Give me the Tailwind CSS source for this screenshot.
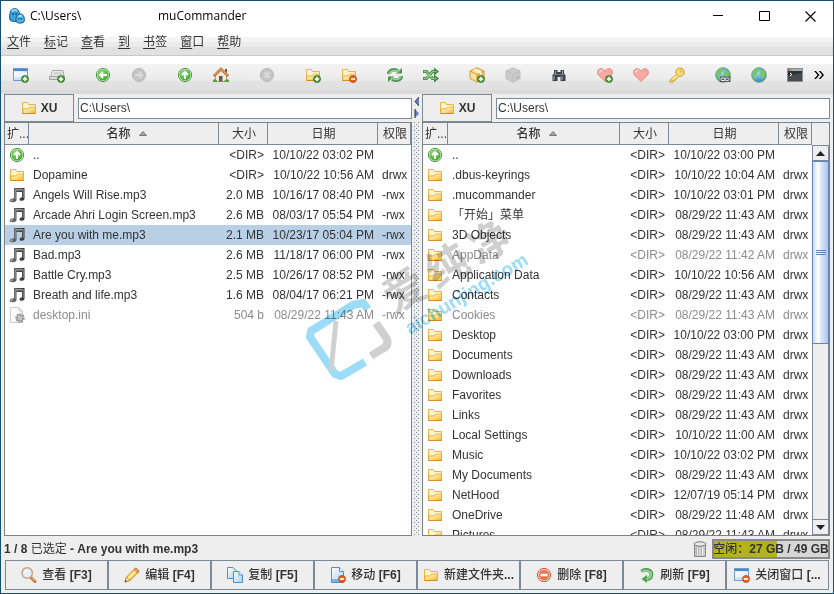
<!DOCTYPE html>
<html lang="zh-CN">
<head>
    <meta charset="UTF-8">
    <meta name="viewport" content="width=device-width, initial-scale=1.0">
    <title>muCommander</title>

    <script src="https://cdn.jsdelivr.net/npm/@tailwindcss/browser@4"></script>
</head>
<body class="h-screen overflow-hidden bg-[#eeeeee] font-['Liberation_Sans','Noto_Sans_CJK_SC',sans-serif] text-xs text-[#333333]">

    <!-- icon sprite, kept rendered so the gradients resolve -->
    <svg class="absolute size-0" aria-hidden="true">
        <defs>
            <linearGradient id="g-folder" x1="0" y1="0" x2="1" y2="1"><stop offset="0" stop-color="#fffbe6"/><stop offset=".5" stop-color="#fbe08a"/><stop offset="1" stop-color="#f0b429"/></linearGradient>
            <linearGradient id="g-page" x1="0" y1="0" x2="1" y2="1"><stop offset="0" stop-color="#ffffff"/><stop offset="1" stop-color="#a9cdf2"/></linearGradient>
            <linearGradient id="g-note" x1="0" y1="0" x2="1" y2="0"><stop offset="0" stop-color="#777777"/><stop offset="1" stop-color="#333333"/></linearGradient>
            <radialGradient id="g-green" cx=".4" cy=".35" r=".7"><stop offset="0" stop-color="#8fe36a"/><stop offset="1" stop-color="#3aa52a"/></radialGradient>
            <radialGradient id="g-globe" cx=".4" cy=".35" r=".7"><stop offset="0" stop-color="#a8dcff"/><stop offset="1" stop-color="#2c7fc4"/></radialGradient>

            <symbol id="plus" viewBox="0 0 16 16"><circle cx="12" cy="12" r="3.5" fill="#4f9a35" stroke="#2f7420" stroke-width=".8"/><path d="M12 9.8v4.4M9.8 12h4.4" stroke="#fff" stroke-width="1.5"/></symbol>
            <symbol id="minus" viewBox="0 0 16 16"><circle cx="12" cy="12" r="3.5" fill="#e8641c" stroke="#b8430c" stroke-width=".8"/><path d="M9.8 12h4.4" stroke="#fff" stroke-width="1.6"/></symbol>
            <symbol id="folder" viewBox="0 0 16 16"><path d="M1.5 13.5V2.5h5l1 2h7v9z" fill="#fdf0b8" stroke="#e6b452"/><path d="M3 4h3M3 6.500h10" stroke="#fff" stroke-width="1"/><path d="M2 13.500V9h5l1.500-2h6v6.500z" fill="url(#g-folder)" stroke="#e3a440" stroke-width=".8"/><path d="M1.500 13.500h13" stroke="#d48a28"/></symbol>
            <symbol id="window" viewBox="0 0 16 16"><rect x=".5" y="1.500" width="14" height="12" fill="url(#g-page)" stroke="#6f9bd1"/><path d="M1 2h13v2H1z" fill="#4a86d4"/><path d="M1 5h13v5H1z" fill="#fff" fill-opacity=".6"/></symbol>
            <symbol id="drive" viewBox="0 0 16 16"><path d="M3.500 3.500h10.500l1 6H1.500z" fill="#ececec" stroke="#a6a6a6"/><path d="M5 5h8l.5 3H4z" fill="#d4d4d4"/><path d="M.5 9.500h15v3H.5z" fill="#dcdcdc" stroke="#a0a0a0"/></symbol>
            <symbol id="disc" viewBox="0 0 16 16"><circle cx="8" cy="8" r="6.600" fill="#e2f3da" stroke="#3d8a32" stroke-width=".9"/><circle cx="8" cy="8" r="5.500" fill="url(#g-green)"/></symbol>
            <symbol id="up" viewBox="0 0 16 16"><use href="#disc"/><path d="M8 12V5.500M5 8l3-3 3 3" fill="none" stroke="#fff" stroke-width="2"/></symbol>
            <symbol id="back" viewBox="0 0 16 16"><use href="#disc"/><path d="M12 8H5.500M8 5L5 8l3 3" fill="none" stroke="#fff" stroke-width="2"/></symbol>
            <symbol id="forward" viewBox="0 0 16 16"><circle cx="8" cy="8" r="6.500" fill="#c6c6c6" stroke="#b4b4b4"/><path d="M4 8h6.500M8 5l3 3-3 3" fill="none" stroke="#dadada" stroke-width="1.800"/></symbol>
            <symbol id="stop" viewBox="0 0 16 16"><circle cx="8" cy="8" r="6.500" fill="#c6c6c6" stroke="#b4b4b4"/><path d="M5.500 5.500l5 5M10.500 5.500l-5 5" stroke="#dadada" stroke-width="2"/></symbol>
            <symbol id="home" viewBox="0 0 16 16"><path d="M2.500 8L8 3l5.500 5v6.500h-11z" fill="#f5ead8" stroke="#a88a68" stroke-width=".8"/><path d="M12 2h2v4l-2-2z" fill="#8c4a2a"/><path d="M.8 9L8 2l7.200 7" fill="none" stroke="#a86530" stroke-width="2.600"/><path d="M1.200 8.500L8 2l6.800 6.500" fill="none" stroke="#e8a35c" stroke-width="1.200"/><path d="M6 14.500V9h3.500v5.500z" fill="#5c5a62"/><path d="M0 15v-2l2-1 2 1.500V15zM16 15v-2l-2-1-2.500 1.500V15z" fill="#4ea53a"/></symbol>
            <symbol id="sync" viewBox="0 0 16 16"><path d="M1.500 7C2 3 7 1.500 11 4" fill="none" stroke="#4c9450" stroke-width="3.400"/><path d="M9 6.500h6V1z" fill="#4c9450"/><path d="M2 6.500C3 4 7 2.500 12 5" fill="none" stroke="#96d094" stroke-width="1.800"/><path d="M14.500 9C14 13 9 14.500 5 12" fill="none" stroke="#4c9450" stroke-width="3.400"/><path d="M7 9.500H1V15z" fill="#4c9450"/><path d="M14 9.500C13 12 9 13.500 4 11" fill="none" stroke="#96d094" stroke-width="1.800"/></symbol>
            <symbol id="swap" viewBox="0 0 16 16"><path d="M0 4.500h3.500l6 7H12M0 11.500h3.500l6-7H12" fill="none" stroke="#3c7f40" stroke-width="3"/><path d="M11 .5l5 4-5 4zM11 7.500l5 4-5 4z" fill="#3c7f40"/><path d="M.5 4.500h3l6 7h4M.5 11.500h3l6-7h4" fill="none" stroke="#8ccb88" stroke-width="1.500"/></symbol>
            <symbol id="box" viewBox="0 0 16 16"><path d="M8 .8l7 3.200v7.500L8 15.200 1 11.500V4z" fill="#fae0a0" stroke="#d39a34"/><path d="M8 7.500v7.500l7-3.500V4z" fill="#efb852"/><path d="M1 4l7 3.500L15 4M8 7.500V15" fill="none" stroke="#c98a2a" stroke-width=".8"/><path d="M5 2.200l6.500 3.300v2.500" fill="none" stroke="#fff6d8" stroke-width="1.800"/></symbol>
            <symbol id="unbox" viewBox="0 0 16 16"><path d="M8 .8l7 3.200v7.500L8 15.200 1 11.500V4z" fill="#cbcbcb" stroke="#bebebe"/><path d="M1 4l7 3.500L15 4M8 7.500V15" fill="none" stroke="#bebebe"/><path d="M9.500 12l3-4 3 4z" fill="#b9b9b9"/></symbol>
            <symbol id="find" viewBox="0 0 16 16"><path d="M3 3h3.500v2h3V3H13v3l1.500 2v6H9.500v-4h-3v4h-5V8L3 6z" fill="#3e434a"/><path d="M3 9v4M11 9v4M4.500 4v3M11.500 4v3" stroke="#9aa2ac" stroke-width="1.200"/><path d="M2 7.500h12" stroke="#848c96" stroke-width=".8"/></symbol>
            <symbol id="heart" viewBox="0 0 16 16"><path d="M8 14.500L1.500 8C-.5 5 1 1.800 4 1.800c2 0 3.300 1 4 2.500.7-1.500 2-2.500 4-2.500 3 0 4.500 3.200 2.500 6.200z" fill="#f9a8a2" stroke="#e28b7c"/><path d="M2.500 5.500C2.700 4 4 3 5.500 3.500" fill="none" stroke="#fde0dc" stroke-width="1.400"/></symbol>
            <symbol id="key" viewBox="0 0 16 16"><path d="M7 8L1 13v2h3v-1.500h2V12h1.500l1.700-2" fill="#f8d768" stroke="#d09a2c"/><circle cx="11" cy="5.200" r="4.200" fill="#fbdc70" stroke="#d09a2c"/><path d="M8.500 8.500L3 13" stroke="#fbe48c" stroke-width="2"/><circle cx="12.300" cy="3.800" r="1.200" fill="#fff" stroke="#c98d1c" stroke-width=".7"/></symbol>
            <symbol id="globe" viewBox="0 0 16 16"><circle cx="8" cy="8" r="7.300" fill="url(#g-globe)" stroke="#68ad68"/><path d="M1.500 6C2.500 3 5 1.500 8 1.500l1 2-2.500 1.800L6 8 3.500 8.500 5 11l-.5 2C2.500 11.500 1 9 1.500 6zM10 3l3.500 1 1 4-2 4-2 .5-.5-3L8.500 7z" fill="#79c56c"/></symbol>
            <symbol id="server" viewBox="0 0 16 16"><use href="#globe"/><path d="M5 9.500h10.500V15H5z" fill="#555b60"/><rect x="6" y="11" width="4" height="2.500" rx="1" fill="none" stroke="#fff"/><rect x="10" y="11" width="4" height="2.500" rx="1" fill="none" stroke="#ddd"/></symbol>
            <symbol id="terminal" viewBox="0 0 16 16"><rect x=".5" y="1.500" width="15" height="13" fill="#2e3436" stroke="#8a8f91"/><path d="M1 2h14v2H1z" fill="#a9adad"/><path d="M1 3h2" stroke="#d65340" stroke-width="1.500"/><path d="M3 3h2" stroke="#75b84a" stroke-width="1.500"/><path d="M1 14V9l14-3v8z" fill="#454c4f"/><path d="M3 6l2 1.500L3 9" fill="none" stroke="#fff"/></symbol>
            <symbol id="music" viewBox="0 0 16 16"><path d="M5 1h10.500v10.500c0 1.200-1 2-2.300 2.300-1.500.3-2.700-.4-2.700-1.500s1.200-2 2.500-2V5H7.500v7.800c0 1.200-1.500 2.400-3.500 2.400-2.200.2-3.500-.6-3.500-1.700S2.500 11.500 5 11z" fill="url(#g-note)"/><path d="M6.300 2.800h8" stroke="#bdbdbd"/><path d="M6.300 3v9M14.300 3v8" stroke="#999" stroke-width=".8"/><path d="M2 13.500l2-.7" stroke="#bbb"/></symbol>
            <symbol id="config" viewBox="0 0 16 16"><path d="M1.500.5h8.500l3.500 3.500v11.500h-12z" fill="#fafafa" stroke="#cccccc"/><path d="M10 .5V4h3.500" fill="#e8e8e8" stroke="#cccccc"/><circle cx="11" cy="11" r="3.700" fill="#d5d5d5" stroke="#8a8a8a" stroke-width="2" stroke-dasharray="1.600 1.200"/><circle cx="11" cy="11" r="3" fill="#d6d6d6" stroke="#999"/><circle cx="11" cy="11" r="1.200" fill="#fff" stroke="#888" stroke-width=".7"/></symbol>
            <symbol id="view" viewBox="0 0 16 16"><path d="M10 10.500l4 4" stroke="#b47636" stroke-width="3" stroke-linecap="round"/><path d="M10.500 10.500l3.500 3.500" stroke="#e3b36c" stroke-width="1.200"/><circle cx="6.200" cy="6" r="5.200" fill="#e3f1fc" stroke="#cba27c" stroke-width="1.500"/><path d="M3.300 5.500c.3-1.500 1.500-2.300 3-2.300" fill="none" stroke="#fff" stroke-width="1.500"/></symbol>
            <symbol id="edit" viewBox="0 0 16 16"><path d="M1 15l1.500-5L11 1.500c1-1 4.500 2 3.500 3.500L6 13.500z" fill="#fcd25a" stroke="#c78a1c"/><path d="M4 11.500L12 3.500" stroke="#fff2b8" stroke-width="1.500"/><path d="M1 15l1.500-5 3.500 3.500z" fill="#f5dfc0" stroke="#b98238" stroke-width=".7"/><path d="M1 15l.7-2 1.300 1.300z" fill="#333"/><path d="M11 1.500c1-1 4.500 2 3.500 3.500l-1 1-3.500-3.500z" fill="#ec9a76" stroke="#bd6a3c" stroke-width=".7"/></symbol>
            <symbol id="copy" viewBox="0 0 16 16"><path d="M.5.5H6L9.500 4v7.500h-9z" fill="url(#g-page)" stroke="#4d8fd0"/><path d="M6.500 4.500H12L15.500 8v7.500h-9z" fill="url(#g-page)" stroke="#4d8fd0"/><path d="M12 4.500V8h3.500" fill="#fff" stroke="#4d8fd0"/></symbol>
            <symbol id="move" viewBox="0 0 16 16"><path d="M1.500.5h8l4 4v11h-12z" fill="url(#g-page)" stroke="#4d8fd0"/><path d="M9.500.5v4h4" fill="#fff" stroke="#4d8fd0"/><path d="M2 12h11v3H2z" fill="#79b3ea"/></symbol>
            <symbol id="delete" viewBox="0 0 16 16"><circle cx="8" cy="8" r="6.600" fill="#f9dccf" stroke="#cc5138"/><circle cx="8" cy="8" r="5.200" fill="#e8734f"/><path d="M4.500 8h7" stroke="#fff" stroke-width="2.500"/></symbol>
            <symbol id="refresh" viewBox="0 0 16 16"><path d="M2.500 4.500C6 1.500 12.500 2.500 12.500 7.500c0 3-2 4.500-5 4.700" fill="none" stroke="#4c9450" stroke-width="3.600"/><path d="M8 8v8L2.500 12z" fill="#4da04e"/><path d="M3 4.500C6 2.500 12.300 3 12.300 7.500c0 2.500-1.500 4-5 4.500" fill="none" stroke="#92d38e" stroke-width="1.900"/></symbol>
            <symbol id="trash" viewBox="0 0 16 16"><path d="M2.500 4h11v11.500h-11z" fill="#c9c9c9" stroke="#8a8a8a"/><path d="M5.500 6v8M8 6v8M10.500 6v8" stroke="#f4f4f4" stroke-width="1.200"/><path d="M4.300 6v8M6.800 6v8M9.300 6v8" stroke="#909090" stroke-width=".6"/><ellipse cx="8" cy="3" rx="6" ry="2.200" fill="#e8e8e8" stroke="#777"/></symbol>
            <symbol id="logo" viewBox="0 0 16 16"><path d="M1 12C0 8 1 4 2 2.500 3.500 0 8 0 9.500 2.500c1.200 2 1.500 6 1 9.500-2 2-7.500 2-9.500 0z" fill="#3aa5da" stroke="#1c5b8c"/><path d="M3 3.500C4 1.800 7 1.500 8 3" fill="none" stroke="#a6e0fa" stroke-width="1.500"/><path d="M7.500 14c-1-2.500-.5-5 .5-6.500 1.500-2 5-2 6.300 0 1 1.500 1.400 4.500.7 6.500-2 1.500-6 1.500-7.500 0z" fill="#4db4e6" stroke="#1c5b8c"/><path d="M9.500 8.500c1-1 2.500-1 3.300 0" fill="none" stroke="#b4e8ff" stroke-width="1.300"/><path d="M4 5v2M7 5v2M10 10v1.500M12.500 10v1.500" stroke="#123a5e" stroke-width="1.200"/></symbol>
        </defs>
    </svg>

    <div class="relative flex h-full flex-col border border-[#16506e]">

        <header class="flex h-[30px] shrink-0 items-center bg-white pl-2 text-black">
            <svg class="mr-[5px] size-4"><use href="#logo"/></svg>
            <h1 class="flex flex-1 font-['Open_Sans','Noto_Sans_CJK_SC',sans-serif] text-xs"><span class="w-32">C:\Users\</span><span>muCommander</span></h1>
            <button aria-label="最小化" class="flex h-full w-[46px] items-center justify-center"><svg class="size-[11px]" viewBox="0 0 11 11"><path d="M0 4.500h10" stroke="#000"/></svg></button>
            <button aria-label="最大化" class="flex h-full w-[46px] items-center justify-center"><svg class="size-[11px]" viewBox="0 0 11 11"><path d="M.5.5h10v9h-10z" fill="none" stroke="#000"/></svg></button>
            <button aria-label="关闭" class="flex h-full w-[46px] items-center justify-center"><svg class="size-[11px]" viewBox="0 0 11 11"><path d="M.5.5l10 10M10.500.5l-10 10" stroke="#000" stroke-width="1.100"/></svg></button>
        </header>

        <nav class="flex h-[25px] shrink-0 items-center gap-[13px] border-b border-[#c8c8c8] bg-[linear-gradient(#fff_6px,#f4f4f4_6px,#f4f4f4_11px,#ebebeb_11px,#ebebeb_16px,#e1e1e1_16px)] pb-[3px] pl-1.5">
            <button><u class="underline-offset-2">文</u>件</button>
            <button><u class="underline-offset-2">标</u>记</button>
            <button><u class="underline-offset-2">查</u>看</button>
            <button><u class="underline-offset-2">到</u></button>
            <button><u class="underline-offset-2">书</u>签</button>
            <button><u class="underline-offset-2">窗</u>口</button>
            <button><u class="underline-offset-2">帮</u>助</button>
        </nav>

        <div id="toolbar" class="flex h-[38px] shrink-0 gap-2.5 bg-[linear-gradient(#fff_8px,#f3f3f3_8px,#efefef_17px,#e9e9e9_25px,#e2e2e2_25px,#e0e0e0_34px,#dadada_34px)] pl-0.5"></div>

        <main class="grid min-h-0 flex-1 grid-cols-[minmax(0,1fr)_10px_minmax(0,1fr)] px-[3px]">
            <section class="flex min-h-0 flex-col">
                <div class="flex h-7 shrink-0 items-center gap-1">
                    <button class="flex h-7 w-[70px] items-center justify-center gap-1 border border-[#7a8a99] font-bold"><svg class="size-4"><use href="#folder"/></svg>XU</button>
                    <input aria-label="左侧路径" value="C:\Users\" class="h-[21px] min-w-0 flex-1 border border-[#7a8a99] bg-white px-px">
                </div>
                <div class="flex min-h-0 flex-1 overflow-hidden border border-[#7d8287] bg-white">
                    <table class="w-full table-fixed border-separate border-spacing-0 self-start">
                        <colgroup><col class="w-6"><col><col class="w-[49px]"><col class="w-[110px]"><col class="w-[33px]"></colgroup>
                        <thead></thead>
                        <tbody id="left-files"></tbody>
                    </table>
                </div>
            </section>

            <div class="flex min-h-0 flex-col items-center pt-0.5">
                <svg class="h-[26px] w-2 shrink-0" viewBox="0 0 8 26"><path d="M6 1v9L2 5.500z" fill="#6382bf"/><path d="M6 1L2 5.500 6 10" fill="none" stroke="#333"/><path d="M2 13v9l4-4.500z" fill="#6382bf"/><path d="M2 13v9" stroke="#333"/></svg>
                <svg class="min-h-0 w-1.5 flex-1">
                    <pattern id="grip" width="4" height="4" patternUnits="userSpaceOnUse"><path d="M0 0h1v1H0zM2 2h1v1H2z" fill="#7a8a99"/></pattern>
                    <rect width="100%" height="100%" fill="url(#grip)"/>
                </svg>
            </div>

            <section class="flex min-h-0 flex-col">
                <div class="flex h-7 shrink-0 items-center gap-1">
                    <button class="flex h-7 w-[70px] items-center justify-center gap-1 border border-[#7a8a99] font-bold"><svg class="size-4"><use href="#folder"/></svg>XU</button>
                    <input aria-label="右侧路径" value="C:\Users\" class="h-[21px] min-w-0 flex-1 border border-[#7a8a99] bg-white px-px">
                </div>
                <div class="flex min-h-0 flex-1 overflow-hidden border border-[#7d8287] bg-white">
                    <table class="min-w-0 flex-1 table-fixed border-separate border-spacing-0 self-start">
                        <colgroup><col class="w-6"><col><col class="w-[49px]"><col class="w-[110px]"><col class="w-[33px]"></colgroup>
                        <thead></thead>
                        <tbody id="right-files"></tbody>
                    </table>
                    <div class="flex w-[17px] shrink-0 flex-col bg-[#eeeeee] pt-[22px]">
                        <button aria-label="向上滚动" class="flex h-4 shrink-0 items-center justify-center border border-[#7a8a99]"><svg class="h-[5px] w-[9px]" viewBox="0 0 9 5"><path d="M0 5h9L4.500 0z" fill="#222"/></svg></button>
                        <div class="flex min-h-0 flex-1 flex-col border-x border-[#7a8a99]">
                            <div class="-mx-px flex h-[51%] flex-col items-center justify-center gap-px border border-[#6382bf] bg-[linear-gradient(90deg,#c8ddf2,#fff_35%,#dbe8f5_55%,#a9c7e8)]">
                                <span class="h-px w-2.5 bg-[#6382bf]"></span>
                                <span class="h-px w-2.5 bg-[#6382bf]"></span>
                                <span class="h-px w-2.5 bg-[#6382bf]"></span>
                            </div>
                        </div>
                        <button aria-label="向下滚动" class="flex h-4 shrink-0 items-center justify-center border border-[#7a8a99]"><svg class="h-[5px] w-[9px]" viewBox="0 0 9 5"><path d="M0 0h9L4.500 5z" fill="#222"/></svg></button>
                    </div>
                </div>
            </section>
        </main>

        <div class="flex h-6 shrink-0 items-center gap-1 px-[3px] pt-px font-bold">
            <span class="flex-1">1 / 8 <span class="font-normal">已选定</span> - Are you with me.mp3</span>
            <button aria-label="回收站"><svg class="size-4"><use href="#trash"/></svg></button>
            <div class="flex h-5 w-[118px] items-center justify-center whitespace-nowrap border-2 border-[#8a8a8a] bg-[linear-gradient(90deg,#b5b31a_55%,#d6d6d6_55%)]"><span class="font-medium">空闲：</span>27 GB / 49 GB</div>
        </div>

        <footer id="commands" class="flex shrink-0 px-1 pb-[3px]"></footer>

        <!-- site watermark -->
        <svg class="pointer-events-none absolute top-[199px] left-[289px] h-[190px] w-[270px] mix-blend-multiply" viewBox="0 0 270 190">
            <g fill="none" stroke-width="8" stroke-linejoin="round">
                <path d="M78 109L73 103 63 105 21 131 20 137 45 174 51 176 75 162" stroke="#9bdcf8"/>
                <path d="M46 121L41 171" stroke="#d0d0d0" stroke-width="5"/>
                <path d="M86 123L97 139Q99 146 92 149L81 156" stroke="#d0d0d0"/>
            </g>
            <text transform="translate(104 114) rotate(-30)" x="0 49 98" class="font-['Noto_Sans_CJK_SC',sans-serif] text-[42px] font-bold" fill="#cfcfcf">爱纯净</text>
            <text transform="translate(120 135) rotate(-31)" class="text-[19px] font-bold" fill="#9bdcf8">aichunjing.com</text>
        </svg>
    </div>

    <script>
        // [icon, badge, label]
        const toolGroups = [
            [['window', 'plus', '新建窗口'], ['drive', 'plus', '新建标签']],
            [['back', '', '后退'], ['forward', '', '前进']],
            [['up', '', '上级文件夹'], ['home', '', '主文件夹']],
            [['stop', '', '停止']],
            [['folder', 'plus', '标记组'], ['folder', 'minus', '取消标记组']],
            [['sync', '', '交换文件夹'], ['swap', '', '设置相同文件夹']],
            [['box', 'plus', '打包'], ['unbox', '', '解包']],
            [['find', '', '查找']],
            [['heart', 'plus', '添加书签'], ['heart', '', '编辑书签'], ['key', '', '编辑凭据']],
            [['server', '', '连接到服务器'], ['globe', '', '显示服务器连接'], ['terminal', '', '运行命令']]
        ];

        const commands = [
            ['view', '', '查看', '[F3]'],
            ['edit', '', '编辑', '[F4]'],
            ['copy', '', '复制', '[F5]'],
            ['move', 'minus', '移动', '[F6]'],
            ['folder', '', '新建文件夹', '...'],
            ['delete', '', '删除', '[F8]'],
            ['refresh', '', '刷新', '[F9]'],
            ['window', 'minus', '关闭窗口', '[...']
        ];

        // [icon, name, size, date, permissions, state]
        const leftFiles = [
            ['up', '..', '<DIR>', '10/10/22 03:02 PM', ''],
            ['folder', 'Dopamine', '<DIR>', '10/10/22 10:56 AM', 'drwx'],
            ['music', 'Angels Will Rise.mp3', '2.0 MB', '10/16/17 08:40 PM', '-rwx'],
            ['music', 'Arcade Ahri Login Screen.mp3', '2.6 MB', '08/03/17 05:54 PM', '-rwx'],
            ['music', 'Are you with me.mp3', '2.1 MB', '10/23/17 05:04 PM', '-rwx', 'selected'],
            ['music', 'Bad.mp3', '2.6 MB', '11/18/17 06:00 PM', '-rwx'],
            ['music', 'Battle Cry.mp3', '2.5 MB', '10/26/17 08:52 PM', '-rwx'],
            ['music', 'Breath and life.mp3', '1.6 MB', '08/04/17 06:21 PM', '-rwx'],
            ['config', 'desktop.ini', '504 b', '08/29/22 11:43 AM', '-rwx', 'hidden']
        ];

        const rightFiles = [
            ['up', '..', '<DIR>', '10/10/22 03:00 PM', ''],
            ['folder', '.dbus-keyrings', '<DIR>', '10/10/22 10:04 AM', 'drwx'],
            ['folder', '.mucommander', '<DIR>', '10/10/22 03:01 PM', 'drwx'],
            ['folder', '「开始」菜单', '<DIR>', '08/29/22 11:43 AM', 'drwx'],
            ['folder', '3D Objects', '<DIR>', '08/29/22 11:43 AM', 'drwx'],
            ['folder', 'AppData', '<DIR>', '08/29/22 11:42 AM', 'drwx', 'hidden'],
            ['folder', 'Application Data', '<DIR>', '10/10/22 10:56 AM', 'drwx'],
            ['folder', 'Contacts', '<DIR>', '08/29/22 11:43 AM', 'drwx'],
            ['folder', 'Cookies', '<DIR>', '08/29/22 11:43 AM', 'drwx', 'hidden'],
            ['folder', 'Desktop', '<DIR>', '10/10/22 03:00 PM', 'drwx'],
            ['folder', 'Documents', '<DIR>', '08/29/22 11:43 AM', 'drwx'],
            ['folder', 'Downloads', '<DIR>', '08/29/22 11:43 AM', 'drwx'],
            ['folder', 'Favorites', '<DIR>', '08/29/22 11:43 AM', 'drwx'],
            ['folder', 'Links', '<DIR>', '08/29/22 11:43 AM', 'drwx'],
            ['folder', 'Local Settings', '<DIR>', '10/10/22 11:00 AM', 'drwx'],
            ['folder', 'Music', '<DIR>', '10/10/22 03:02 PM', 'drwx'],
            ['folder', 'My Documents', '<DIR>', '08/29/22 11:43 AM', 'drwx'],
            ['folder', 'NetHood', '<DIR>', '12/07/19 05:14 PM', 'drwx'],
            ['folder', 'OneDrive', '<DIR>', '08/29/22 11:48 AM', 'drwx'],
            ['folder', 'Pictures', '<DIR>', '08/29/22 11:43 AM', 'drwx']
        ];

        const rowStyles = { selected: 'bg-[#b8cfe5]', hidden: 'text-[#8c8c8c]' };

        function icon(name, badge) {
            return `<svg class="size-4 shrink-0" viewBox="0 0 16 16"><use href="#${name}"/>${badge ? `<use href="#${badge}"/>` : ''}</svg>`;
        }

        function escapeHtml(text) {
            return text.replace(/</g, '&lt;').replace(/>/g, '&gt;');
        }

        function fileRow([type, name, size, date, perms, state]) {
            return `<tr class="h-5 whitespace-nowrap leading-5 ${rowStyles[state] || ''}">
                <td class="pl-1">${icon(type)}</td>
                <td class="truncate px-1">${name}</td>
                <td class="pr-1 text-right">${escapeHtml(size)}</td>
                <td class="pr-1 text-right">${date}</td>
                <td class="pl-1">${perms}</td>
            </tr>`;
        }

        document.querySelectorAll('thead').forEach(head => {
            const cell = 'h-[22px] border-r border-b border-[#7a8a99] bg-[#eeeeee] pl-0.5 font-normal whitespace-nowrap overflow-hidden';
            head.innerHTML = `<tr>
                <th class="${cell}">扩...</th>
                <th class="${cell}"><span class="flex items-center justify-center gap-2 pl-1 font-medium">名称<svg class="h-[5px] w-2" viewBox="0 0 8 5"><path d="M.5 4.500h7L4 .5z" fill="#aaa" stroke="#777"/></svg></span></th>
                <th class="${cell}">大小</th>
                <th class="${cell}">日期</th>
                <th class="${cell}">权限</th>
            </tr>`;
        });

        document.getElementById('left-files').innerHTML = leftFiles.map(fileRow).join('');
        document.getElementById('right-files').innerHTML = rightFiles.map(fileRow).join('');

        document.getElementById('toolbar').innerHTML = toolGroups.map(group =>
            `<div class="flex">${group.map(([name, badge, label]) =>
                `<button aria-label="${label}" class="flex w-9 items-center justify-center">${icon(name, badge)}</button>`).join('')}</div>`
        ).join('') + '<button class="-ml-2.5 w-3 pb-1 text-xl text-black">»</button>';

        document.getElementById('commands').innerHTML = commands.map(([name, badge, label, key]) =>
            `<button class="flex h-[30px] min-w-0 flex-1 items-center justify-center gap-[5px] overflow-hidden border border-[#7a8a99] font-bold whitespace-nowrap">${icon(name, badge)}<span><span class="font-medium">${label}</span>${key === '...' ? '' : ' '}${key}</span></button>`
        ).join('');
    </script>
</body>
</html>
